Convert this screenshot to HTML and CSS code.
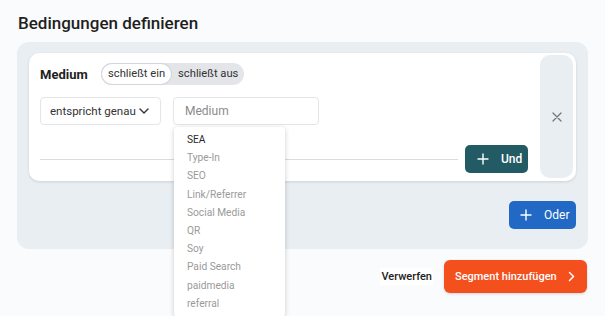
FILE: index.html
```html
<!doctype html>
<html>
 <head>
  <meta charset="utf-8">
  <link rel="stylesheet" href="styles.css">
 </head>
 <body>
  <div class="page">
   <h2 class="title">Bedingungen definieren</h2>

   <div class="panel">
    <div class="card">
     <div class="cond">
      <div class="cond-head">
       <span class="cond-label">Medium</span>
       <div class="toggle">
        <span class="toggle-opt active">schließt ein</span>
        <span class="toggle-opt">schließt aus</span>
       </div>
      </div>

      <div class="cond-fields">
       <div class="select">
        <span>entspricht genau</span>
        <svg width="10" height="6" viewBox="0 0 10 6"><path d="M1 1l4 4 4-4" fill="none" stroke="#333" stroke-width="1.4" stroke-linecap="round" stroke-linejoin="round"/></svg>
       </div>
       <div class="field-wrap">
        <div class="field">Medium</div>
        <!-- open suggestion list -->
        <ul class="dropdown">
         <li class="current">SEA</li>
         <li>Type-In</li>
         <li>SEO</li>
         <li>Link/Referrer</li>
         <li>Social Media</li>
         <li>QR</li>
         <li>Soy</li>
         <li>Paid Search</li>
         <li>paidmedia</li>
         <li>referral</li>
        </ul>
       </div>
      </div>

      <div class="cond-foot">
       <div class="rule"></div>
       <button class="btn btn-and">
        <svg width="12" height="12" viewBox="0 0 12 12"><path d="M6 1v10M1 6h10" stroke="#fff" stroke-width="1.4" stroke-linecap="round"/></svg>
        Und
       </button>
      </div>
     </div>

     <div class="remove">
      <svg width="10" height="10" viewBox="0 0 10 10"><path d="M1 1l8 8M9 1l-8 8" stroke="#777" stroke-width="1.3" stroke-linecap="round"/></svg>
     </div>
    </div>

    <div class="panel-foot">
     <button class="btn btn-or">
      <svg width="12" height="12" viewBox="0 0 12 12"><path d="M6 1v10M1 6h10" stroke="#fff" stroke-width="1.4" stroke-linecap="round"/></svg>
      Oder
     </button>
    </div>
   </div>

   <div class="actions">
    <button class="btn-plain">Verwerfen</button>
    <button class="btn btn-submit">
     Segment hinzufügen
     <svg width="7" height="11" viewBox="0 0 7 11"><path d="M1.5 1.5l4 4-4 4" fill="none" stroke="#fff" stroke-width="1.5" stroke-linecap="round" stroke-linejoin="round"/></svg>
    </button>
   </div>
  </div>
 </body>
</html>
```

FILE: styles.css
```css
body {
  margin: 0;
  background-color: #ffffff;
  font-family: Roboto, "Noto Sans", sans-serif;
  color: #222;
}

.page {
  position: relative;
  height: 316px;
  box-sizing: border-box;
  padding: 12px 17px 0 17px;
  background-color: #fafbfc;
  white-space: nowrap;
}

.title {
  margin: 0 0 0 1px;
  font-size: 17px;
  line-height: 22px;
  font-weight: 500;
  color: #1f1f1f;
}

/* gray box round the conditions */
.panel {
  margin-top: 8px;
  width: 571px;
  height: 207px;
  box-sizing: border-box;
  padding: 11px 12px 0 12px;
  background-color: #e9eef3;
  border-radius: 12px;
}

.card {
  display: flex;
  height: 128px;
  box-sizing: border-box;
  padding: 2px 3px 3px 11px;
  background-color: #fff;
  border-radius: 10px;
  box-shadow: 0 1px 3px rgba(0, 0, 0, 0.12);
}

.cond {
  flex: 1;
  padding-top: 8px;
}

.cond-head {
  display: flex;
  align-items: center;
  gap: 12px;
}

.cond-label {
  width: 49px;
  font-size: 13px;
  font-weight: 700;
  color: #222;
}

.toggle {
  display: flex;
  align-items: center;
  gap: 2px;
  width: 143px;
  height: 22px;
  box-sizing: border-box;
  padding: 1px;
  background-color: #e3e5e8;
  border-radius: 11px;
  font-size: 11.2px;
  color: #333;
}

.toggle-opt {
  padding: 0 5px;
  line-height: 20px;
}

.toggle-opt.active {
  padding: 0 6px;
  background-color: #fff;
  border-radius: 10px;
  box-shadow: 0 0 0 1px #d3d6da;
}

.cond-fields {
  display: flex;
  gap: 12px;
  margin-top: 12px;
}

.select {
  display: flex;
  align-items: center;
  justify-content: space-between;
  width: 121px;
  height: 28px;
  box-sizing: border-box;
  padding: 0 11px 0 9px;
  border: 1px solid #e3e5e8;
  border-radius: 4px;
  font-size: 11.5px;
  color: #333;
}

.field-wrap {
  position: relative;
}

.field {
  width: 146px;
  height: 28px;
  box-sizing: border-box;
  padding: 0 11px;
  border: 1px solid #e3e5e8;
  border-radius: 4px;
  font-size: 12px;
  line-height: 26px;
  color: #8a8a8a;
}

.dropdown {
  position: absolute;
  top: 30px;
  left: 1px;
  z-index: 10;
  width: 111px;
  height: 190px;
  box-sizing: border-box;
  margin: 0;
  padding: 4px 0 0 13px;
  list-style: none;
  background-color: #fff;
  border-radius: 4px;
  box-shadow: 0 1px 5px rgba(0, 0, 0, 0.2);
}

.dropdown li {
  font-size: 10.2px;
  line-height: 18.2px;
  color: #9a9a9a;
}

.dropdown li.current {
  color: #2a2a2a;
}

.cond-foot {
  display: flex;
  align-items: center;
  gap: 7px;
  margin-top: 20px;
  padding-right: 12px;
}

.rule {
  flex: 1;
  height: 1px;
  background-color: #d9dcdf;
}

.btn {
  display: flex;
  align-items: center;
  border: none;
  border-radius: 5px;
  color: #fff;
  font-family: inherit;
  font-size: 12px;
  font-weight: 500;
  cursor: pointer;
}

.btn-and {
  gap: 12px;
  width: 63px;
  height: 28px;
  padding: 0 0 0 12px;
  background-color: #235b65;
}

.remove {
  display: flex;
  align-items: center;
  justify-content: center;
  width: 33px;
  background-color: #e9eef3;
  border-radius: 10px;
}

.panel-foot {
  display: flex;
  justify-content: flex-end;
  margin-top: 20px;
}

.btn-or {
  gap: 12px;
  width: 67px;
  height: 28px;
  padding: 0 0 0 11px;
  background-color: #2169c4;
  font-weight: 400;
}

.actions {
  display: flex;
  justify-content: flex-end;
  align-items: center;
  gap: 11px;
  width: 570px;
  margin-top: 11px;
}

.btn-plain {
  padding: 2px 1px;
  border: none;
  background-color: #fff;
  font-family: inherit;
  font-size: 11px;
  font-weight: 500;
  color: #222;
}

.btn-submit {
  justify-content: space-between;
  width: 143px;
  height: 33px;
  padding: 0 12px 0 11px;
  background-color: #f3501e;
  border-radius: 6px;
  font-size: 11px;
  box-shadow: 0 1px 3px rgba(0, 0, 0, 0.15);
}
```
